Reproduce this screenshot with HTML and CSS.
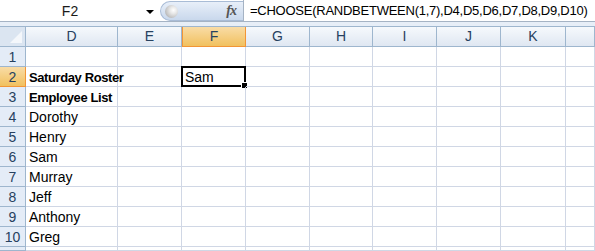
FILE: index.html
```html
<!DOCTYPE html>
<html lang='en'>

<head>
    <meta charset='UTF-8'>
    <title>Saturday Roster</title>
    <link rel="stylesheet" href="styles.css">
</head>

<body>
    <div class='formula-bar'>
        <div class='name-box'>
            <span class='name-text'>F2</span>
            <span class='drop-arrow'></span>
        </div>
        <div class='fx-pill'>
            <span class='ball'></span>
            <span class='fx'>fx</span>
        </div>
        <div class='formula-input'>=CHOOSE(RANDBETWEEN(1,7),D4,D5,D6,D7,D8,D9,D10)</div>
    </div>
    <div class='strip'></div>

    <div class='sheet'>
        <div class='corner'><span class='corner-tri'></span></div>
        <div class='col-head'>D</div>
        <div class='col-head'>E</div>
        <div class='col-head active'>F</div>
        <div class='col-head'>G</div>
        <div class='col-head'>H</div>
        <div class='col-head'>I</div>
        <div class='col-head'>J</div>
        <div class='col-head'>K</div>
        <div class='col-head'></div>

        <div class='row-head'>1</div>
        <div class='cell'></div><div class='cell'></div><div class='cell'></div><div class='cell'></div><div class='cell'></div><div class='cell'></div><div class='cell'></div><div class='cell'></div><div class='cell'></div>

        <div class='row-head active'>2</div>
        <div class='cell bold'>Saturday Roster</div><div class='cell'></div><div class='cell selected'>Sam<span class='handle'></span></div><div class='cell'></div><div class='cell'></div><div class='cell'></div><div class='cell'></div><div class='cell'></div><div class='cell'></div>

        <div class='row-head'>3</div>
        <div class='cell bold'>Employee List</div><div class='cell'></div><div class='cell'></div><div class='cell'></div><div class='cell'></div><div class='cell'></div><div class='cell'></div><div class='cell'></div><div class='cell'></div>

        <div class='row-head'>4</div>
        <div class='cell'>Dorothy</div><div class='cell'></div><div class='cell'></div><div class='cell'></div><div class='cell'></div><div class='cell'></div><div class='cell'></div><div class='cell'></div><div class='cell'></div>

        <div class='row-head'>5</div>
        <div class='cell'>Henry</div><div class='cell'></div><div class='cell'></div><div class='cell'></div><div class='cell'></div><div class='cell'></div><div class='cell'></div><div class='cell'></div><div class='cell'></div>

        <div class='row-head'>6</div>
        <div class='cell'>Sam</div><div class='cell'></div><div class='cell'></div><div class='cell'></div><div class='cell'></div><div class='cell'></div><div class='cell'></div><div class='cell'></div><div class='cell'></div>

        <div class='row-head'>7</div>
        <div class='cell'>Murray</div><div class='cell'></div><div class='cell'></div><div class='cell'></div><div class='cell'></div><div class='cell'></div><div class='cell'></div><div class='cell'></div><div class='cell'></div>

        <div class='row-head'>8</div>
        <div class='cell'>Jeff</div><div class='cell'></div><div class='cell'></div><div class='cell'></div><div class='cell'></div><div class='cell'></div><div class='cell'></div><div class='cell'></div><div class='cell'></div>

        <div class='row-head'>9</div>
        <div class='cell'>Anthony</div><div class='cell'></div><div class='cell'></div><div class='cell'></div><div class='cell'></div><div class='cell'></div><div class='cell'></div><div class='cell'></div><div class='cell'></div>

        <div class='row-head'>10</div>
        <div class='cell'>Greg</div><div class='cell'></div><div class='cell'></div><div class='cell'></div><div class='cell'></div><div class='cell'></div><div class='cell'></div><div class='cell'></div><div class='cell'></div>

        <div class='row-head'></div>
        <div class='cell'></div><div class='cell'></div><div class='cell'></div><div class='cell'></div><div class='cell'></div><div class='cell'></div><div class='cell'></div><div class='cell'></div><div class='cell'></div>
    </div>
</body>

</html>
```

FILE: styles.css
```css
html, body {
    overflow: hidden;
}

body {
    margin: 0;
    width: 595px;
    height: 251px;
    background-color: #fff;
    font-family: "Liberation Sans", Arial, sans-serif;
    font-size: 14px;
    color: #000;
}

.formula-bar {
    display: flex;
    height: 22px;
    border-bottom: 1px solid #a5b3c4;
    box-sizing: border-box;
}

.name-box {
    width: 160px;
    display: flex;
    align-items: center;
    position: relative;
}

.name-text {
    flex: 1;
    text-align: center;
    padding-right: 20px;
    color: #1a1a1a;
}

.drop-arrow {
    position: absolute;
    left: 146px;
    top: 10px;
    border-left: 4px solid transparent;
    border-right: 4px solid transparent;
    border-top: 4px solid #000;
}

.fx-pill {
    width: 83px;
    height: 20px;
    margin-top: 1px;
    box-sizing: border-box;
    border: 1px solid #a9bcd6;
    border-right: none;
    border-radius: 10px 0 0 10px;
    background: linear-gradient(#e8eff9, #c9d8ec);
    display: flex;
    align-items: center;
    justify-content: space-between;
    padding: 0 4px 0 4px;
}

.ball {
    width: 13px;
    height: 13px;
    border-radius: 50%;
    background: radial-gradient(circle at 65% 40%, #fff 0, #e8e8e8 30%, #a0a0a0 100%);
}

.fx {
    font-family: "Liberation Serif", serif;
    font-style: italic;
    font-weight: bold;
    font-size: 14px;
    color: #555;
    letter-spacing: -1px;
    padding-right: 3px;
}

.formula-input {
    flex: 1;
    border-left: 1px solid #a5b3c4;
    padding-left: 6px;
    line-height: 21px;
    font-size: 13px;
    white-space: nowrap;
    overflow: hidden;
    letter-spacing: -0.25px;
}

.strip {
    height: 4px;
    background: #e7eef7;
    border-bottom: 1px solid #9eb6ce;
}

.sheet {
    display: grid;
    grid-template-columns: 26px 92px 64px 64px 64px 63px 64px 64px 65px 1fr;
    grid-template-rows: repeat(11, 20px) 4px;
}

.corner {
    background: #dbe5f1;
    border-right: 1px solid #9eb6ce;
    border-bottom: 1px solid #9eb6ce;
    position: relative;
}

.corner-tri {
    position: absolute;
    right: 3px;
    bottom: 3px;
    border-left: 12px solid transparent;
    border-bottom: 12px solid #f4f7fb;
}

.col-head {
    background: linear-gradient(#f6f9fc, #dfe7f2);
    border-right: 1px solid #9eb6ce;
    border-bottom: 1px solid #9eb6ce;
    text-align: center;
    line-height: 19px;
    color: #27415f;
}

.col-head.active {
    background: linear-gradient(#f9dca6, #f1c15f);
    border: 1px solid #f29536;
    border-top: none;
    line-height: 19px;
}

.row-head {
    background: #e4ecf7;
    border-right: 1px solid #9eb6ce;
    border-bottom: 1px solid #9eb6ce;
    text-align: center;
    line-height: 20px;
    color: #27415f;
    overflow: hidden;
}

.row-head.active {
    background: linear-gradient(#f9dca6, #f1c15f);
    border-right: 1px solid #f29536;
    border-bottom: 1px solid #f29536;
}

.cell {
    border-right: 1px solid #d0d7e5;
    border-bottom: 1px solid #d0d7e5;
    padding-left: 3px;
    line-height: 21px;
    white-space: nowrap;
    position: relative;
}

.bold {
    font-weight: bold;
    font-size: 13px;
    letter-spacing: -0.4px;
}

.selected {
    border: 2px solid #000;
    margin: -1px 0 0 -1px;
    padding-left: 2px;
    line-height: 19px;
}

.handle {
    position: absolute;
    right: -4px;
    bottom: -4px;
    width: 5px;
    height: 5px;
    background: #000;
    border: 1px solid #fff;
}
```
